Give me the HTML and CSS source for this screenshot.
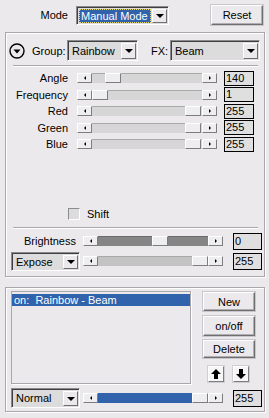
FILE: index.html
```html
<!DOCTYPE html>
<html lang="en">
<head>
    <meta charset="UTF-8">
    <meta name="viewport" content="width=device-width, initial-scale=1.0">
    <title>Light FX</title>
    <link rel="stylesheet" href="styles.css">
</head>
<body>
    <div class="topbar">
        <span class="mode-label">Mode</span>
        <div class="combo combo-mode">
            <span class="combo-text focused">Manual Mode</span>
            <span class="combo-btn"><i class="tri-down"></i></span>
        </div>
        <button class="btn btn-reset">Reset</button>
    </div>

    <div class="panel panel-fx">
        <div class="fx-head">
            <svg class="collapse" width="16" height="16" viewBox="0 0 16 16">
                <circle cx="8" cy="8" r="7" fill="none" stroke="#000" stroke-width="1.4"/>
                <polygon points="4.5,6.5 11.5,6.5 8,10.5" fill="#000"/>
            </svg>
            <span class="head-label">Group:</span>
            <div class="combo combo-group">
                <span class="combo-text">Rainbow</span>
                <span class="combo-btn"><i class="tri-down"></i></span>
            </div>
            <span class="head-label fx-label">FX:</span>
            <div class="combo combo-fx">
                <span class="combo-text">Beam</span>
                <span class="combo-btn"><i class="tri-down"></i></span>
            </div>
        </div>
        <div class="sep"></div>

        <div class="params">
            <div class="param">
                <span class="param-label">Angle</span>
                <div class="slider">
                    <span class="sl-btn"><i class="tri-left"></i></span>
                    <span class="sl-fill" style="width: 13px"></span>
                    <span class="sl-thumb"></span>
                    <span class="sl-rest"></span>
                    <span class="sl-btn"><i class="tri-right"></i></span>
                </div>
                <span class="value">140</span>
            </div>
            <div class="param">
                <span class="param-label">Frequency</span>
                <div class="slider">
                    <span class="sl-btn"><i class="tri-left"></i></span>
                    <span class="sl-fill" style="width: 0px"></span>
                    <span class="sl-thumb"></span>
                    <span class="sl-rest"></span>
                    <span class="sl-btn"><i class="tri-right"></i></span>
                </div>
                <span class="value">1</span>
            </div>
            <div class="param">
                <span class="param-label">Red</span>
                <div class="slider">
                    <span class="sl-btn"><i class="tri-left"></i></span>
                    <span class="sl-fill" style="width: 93px"></span>
                    <span class="sl-thumb"></span>
                    <span class="sl-rest"></span>
                    <span class="sl-btn"><i class="tri-right"></i></span>
                </div>
                <span class="value">255</span>
            </div>
            <div class="param">
                <span class="param-label">Green</span>
                <div class="slider">
                    <span class="sl-btn"><i class="tri-left"></i></span>
                    <span class="sl-fill" style="width: 93px"></span>
                    <span class="sl-thumb"></span>
                    <span class="sl-rest"></span>
                    <span class="sl-btn"><i class="tri-right"></i></span>
                </div>
                <span class="value">255</span>
            </div>
            <div class="param">
                <span class="param-label">Blue</span>
                <div class="slider">
                    <span class="sl-btn"><i class="tri-left"></i></span>
                    <span class="sl-fill" style="width: 93px"></span>
                    <span class="sl-thumb"></span>
                    <span class="sl-rest"></span>
                    <span class="sl-btn"><i class="tri-right"></i></span>
                </div>
                <span class="value">255</span>
            </div>
        </div>

        <div class="shift-row">
            <span class="checkbox"></span>
            <span>Shift</span>
        </div>
        <div class="sep sep-low"></div>

        <div class="bright-row">
            <span class="bright-label">Brightness</span>
            <div class="slider slider-dark">
                <span class="sl-btn"><i class="tri-left"></i></span>
                <span class="sl-fill" style="width: 54px"></span>
                <span class="sl-thumb"></span>
                <span class="sl-rest"></span>
                <span class="sl-btn"><i class="tri-right"></i></span>
            </div>
            <span class="value value-wide">0</span>
        </div>
        <div class="expose-row">
            <div class="combo combo-small">
                <span class="combo-text">Expose</span>
                <span class="combo-btn"><i class="tri-down"></i></span>
            </div>
            <div class="slider slider-light">
                <span class="sl-btn"><i class="tri-left"></i></span>
                <span class="sl-fill" style="width: 94px"></span>
                <span class="sl-thumb"></span>
                <span class="sl-rest"></span>
                <span class="sl-btn"><i class="tri-right"></i></span>
            </div>
            <span class="value value-wide">255</span>
        </div>
    </div>

    <div class="panel panel-list">
        <div class="list-area">
            <div class="listbox">
                <div class="list-item selected">on:  Rainbow - Beam</div>
            </div>
            <div class="list-buttons">
                <button class="btn btn-new">New</button>
                <button class="btn btn-onoff">on/off</button>
                <button class="btn btn-delete">Delete</button>
                <div class="arrows">
                    <span class="arrow-btn">
                        <svg width="10" height="10" viewBox="0 0 10 10"><polygon points="5,0 10,5 7,5 7,10 3,10 3,5 0,5" fill="#000"/></svg>
                    </span>
                    <span class="arrow-btn">
                        <svg width="10" height="10" viewBox="0 0 10 10"><polygon points="5,10 10,5 7,5 7,0 3,0 3,5 0,5" fill="#000"/></svg>
                    </span>
                </div>
            </div>
        </div>
        <div class="blend-row">
            <div class="combo combo-small">
                <span class="combo-text">Normal</span>
                <span class="combo-btn"><i class="tri-down"></i></span>
            </div>
            <div class="slider slider-blue">
                <span class="sl-btn"><i class="tri-left"></i></span>
                <span class="sl-fill" style="width: 94px"></span>
                <span class="sl-thumb"></span>
                <span class="sl-rest"></span>
                <span class="sl-btn"><i class="tri-right"></i></span>
            </div>
            <span class="value value-wide">255</span>
        </div>
    </div>
</body>
</html>
```

FILE: styles.css
```css
body {
    margin: 0;
    width: 269px;
    height: 418px;
    background-color: #ece9ec;
    font-family: "Liberation Sans", Arial, sans-serif;
    font-size: 11px;
    color: #000;
    overflow: hidden;
}
.topbar {
    display: flex;
    align-items: center;
    height: 30px;
}
.mode-label {
    width: 68px;
    text-align: right;
    margin-right: 8px;
}
.btn {
    font-family: inherit;
    font-size: 11px;
    background-color: #ece9ec;
    border: 1px solid;
    border-color: #fff #6f6f6f #6f6f6f #fff;
    box-shadow: inset -1px -1px 0 #b0aeb2, 0 0 0 1px #c9c7cb;
    padding: 0;
    color: #000;
}
.btn-reset {
    margin-left: 42px;
    width: 52px;
    height: 20px;
}

/* combo boxes */
.combo {
    display: flex;
    box-sizing: border-box;
    border: 1px solid;
    border-color: #8b8a8e #fff #fff #8b8a8e;
    box-shadow: inset 1px 1px 0 #404040;
    background-color: #dcdcdc;
    padding: 2px 1px 1px 2px;
}
.combo-text {
    flex: 1;
    line-height: 15px;
    padding-left: 2px;
    white-space: nowrap;
    overflow: hidden;
}
.combo-text.focused {
    background-color: #3163ad;
    color: #fff;
    outline: 1px dotted #e8d870;
    outline-offset: -1px;
}
.combo-btn {
    width: 15px;
    box-sizing: border-box;
    display: flex;
    align-items: center;
    justify-content: center;
    background-color: #ece9ec;
    border: 1px solid;
    border-color: #fff #6f6f6f #6f6f6f #fff;
    margin-left: 1px;
}
.tri-down {
    width: 0;
    height: 0;
    border-left: 4px solid transparent;
    border-right: 4px solid transparent;
    border-top: 4px solid #000;
}
.combo-mode {
    width: 93px;
    height: 19px;
}
.combo-mode .combo-text {
    line-height: 14px;
}

/* panels */
.panel {
    box-sizing: border-box;
    margin-left: 5px;
    width: 260px;
    border: 1px solid #a9a7ab;
    box-shadow: inset 1px 1px 0 #fff, 1px 1px 0 #fff;
}
.panel-fx {
    margin-top: 2px;
    height: 245px;
}
.fx-head {
    display: flex;
    align-items: center;
    height: 21px;
    margin-top: 7px;
    padding-left: 3px;
}
.collapse {
    margin-right: 7px;
}
.head-label {
    width: 35px;
}
.fx-label {
    width: 19px;
    margin-left: 13px;
}
.combo-group {
    width: 71px;
    height: 21px;
}
.combo-fx {
    width: 90px;
    height: 21px;
}
.combo-group .combo-text,
.combo-fx .combo-text {
    line-height: 16px;
}
.sep {
    margin: 4px 0 0 7px;
    width: 245px;
    height: 1px;
    background-color: #a9a7ab;
    border-bottom: 1px solid #fff;
}

/* parameter rows */
.params {
    margin-top: 3px;
}
.param {
    display: flex;
    align-items: center;
    height: 16.5px;
}
.param-label {
    width: 62px;
    text-align: right;
    margin-right: 9px;
}
.value {
    box-sizing: border-box;
    margin-left: 7px;
    width: 30px;
    height: 15px;
    border: 1px solid #000;
    background-color: #e0dfe0;
    line-height: 13px;
    padding-left: 1px;
}
.value-wide {
    margin-left: 10px;
    width: 29px;
    height: 17px;
    line-height: 15px;
}

/* scroll style sliders */
.slider {
    display: flex;
    width: 140px;
    height: 10px;
    background-color: #d6d6d6;
}
.sl-btn,
.sl-thumb {
    box-sizing: border-box;
    display: flex;
    align-items: center;
    justify-content: center;
    background-color: #eeedef;
    border: 1px solid;
    border-color: #fff #7d7d7d #7d7d7d #fff;
}
.sl-btn {
    width: 15px;
}
.sl-thumb {
    width: 16px;
}
.sl-fill,
.sl-rest {
    box-shadow: inset 0 1px 0 #a8a8a8;
}
.sl-rest {
    flex: 1;
}
.tri-left {
    width: 0;
    height: 0;
    border-top: 2px solid transparent;
    border-bottom: 2px solid transparent;
    border-right: 2px solid #000;
}
.tri-right {
    width: 0;
    height: 0;
    border-top: 2px solid transparent;
    border-bottom: 2px solid transparent;
    border-left: 2px solid #000;
}
.slider-dark .sl-fill,
.slider-dark .sl-rest {
    background-color: #858585;
    box-shadow: inset 0 1px 0 #6a6a6a;
}
.slider-light .sl-fill {
    background-color: #c3c3c3;
}
.slider-blue .sl-fill {
    background-color: #3163ad;
    box-shadow: none;
}

/* shift / brightness */
.shift-row {
    display: flex;
    align-items: center;
    margin-top: 55px;
    padding-left: 62px;
    height: 13px;
}
.checkbox {
    box-sizing: border-box;
    width: 12px;
    height: 12px;
    margin-right: 7px;
    background-color: #dcdcdc;
    border: 1px solid;
    border-color: #8b8a8e #fff #fff #8b8a8e;
}
.sep-low {
    margin-top: 6px;
}
.bright-row {
    display: flex;
    align-items: center;
    margin-top: 4px;
    height: 17px;
}
.bright-label {
    width: 70px;
    text-align: right;
    margin-right: 7px;
}
.expose-row {
    display: flex;
    align-items: center;
    margin-top: 2px;
    height: 19px;
    padding-left: 5px;
}
.combo-small {
    width: 69px;
    height: 19px;
    margin-right: 3px;
}
.combo-small .combo-text {
    line-height: 14px;
}

/* layer list */
.panel-list {
    margin-top: 10px;
    height: 125px;
}
.list-area {
    display: flex;
    padding: 3px 0 0 5px;
}
.listbox {
    box-sizing: border-box;
    width: 180px;
    height: 93px;
    border: 1px solid #a9a7ab;
    box-shadow: 1px 1px 0 #fff;
    padding: 2px 0 0 0;
}
.list-item {
    height: 12px;
    line-height: 12px;
    padding-left: 2px;
    white-space: pre;
}
.list-item.selected {
    background-color: #3163ad;
    color: #fff;
}
.list-buttons {
    display: flex;
    flex-direction: column;
    margin-left: 12px;
    width: 52px;
}
.btn-new {
    margin-top: 1px;
    height: 19px;
}
.btn-onoff {
    margin-top: 5px;
    height: 20px;
}
.btn-delete {
    margin-top: 4px;
    height: 18px;
}
.arrows {
    display: flex;
    margin-top: 8px;
    padding-left: 5px;
    gap: 9px;
}
.arrow-btn {
    box-sizing: border-box;
    width: 16px;
    height: 16px;
    display: flex;
    align-items: center;
    justify-content: center;
    background-color: #f6f6f6;
    border: 1px solid;
    border-color: #fff #7d7d7d #7d7d7d #fff;
    box-shadow: 0 0 0 1px #d0ced2;
}
.blend-row {
    display: flex;
    align-items: center;
    margin-top: 4px;
    padding-left: 5px;
    height: 20px;
}
.blend-row .combo-small {
    height: 20px;
}
```
